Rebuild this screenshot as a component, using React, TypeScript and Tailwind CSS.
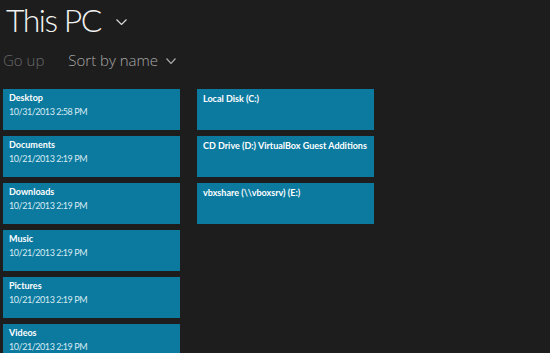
import React from "react";

const Chevron = ({ w, h, stroke }: { w: number; h: number; stroke: string }) => (
  <svg width={w} height={h} viewBox={`0 0 ${w} ${h}`} fill="none">
    <path d={`M0.5 0.5 L${w / 2} ${h - 0.5} L${w - 0.5} 0.5`} stroke={stroke} strokeWidth="1.2" />
  </svg>
);

const left = [
  { name: "Desktop", date: "10/31/2013 2:58 PM" },
  { name: "Documents", date: "10/21/2013 2:19 PM" },
  { name: "Downloads", date: "10/21/2013 2:19 PM" },
  { name: "Music", date: "10/21/2013 2:19 PM" },
  { name: "Pictures", date: "10/21/2013 2:19 PM" },
  { name: "Videos", date: "10/21/2013 2:19 PM" },
];

const right = [
  "Local Disk (C:)",
  "CD Drive (D:) VirtualBox Guest Additions",
  "vbxshare (\\\\vboxsrv) (E:)",
];

export default function App() {
  return (
    <div
      className="w-[550px] h-[353px] overflow-hidden bg-[#1d1d1d] text-white"
      style={{ fontFamily: '"Open Sans", "Noto Sans", sans-serif' }}
    >
      <div className="flex items-center pl-[6px] h-[40px]">
        <span
          className="text-[32px] leading-[40px] font-light tracking-[-1.5px] text-[#f2f2f2]"
          style={{ fontFamily: 'Lato, "Open Sans", sans-serif' }}
        >
          This PC
        </span>
        <span className="ml-[15px] mt-[4px]">
          <Chevron w={11} h={6} stroke="#d8d8d8" />
        </span>
      </div>
      <div className="flex items-center pl-[3px] mt-[9px] h-[22px] text-[15px] font-light">
        <span className="text-[#6a6a6a]">Go up</span>
        <span className="ml-[24px] text-[#a8a8a8]">Sort by name</span>
        <span className="ml-[8px] mt-[2px]">
          <Chevron w={10} h={6} stroke="#a8a8a8" />
        </span>
      </div>
      <div
        className="flex gap-[17px] pl-[3px] mt-[18px]"
        style={{ fontFamily: 'Lato, "Open Sans", sans-serif' }}
      >
        <div className="flex flex-col gap-[6px] w-[177px]">
          {left.map((t) => (
            <div key={t.name} className="h-[41px] bg-[#0c7a9f] pl-[6px] pt-[3px]">
              <div className="text-[9px] leading-[11px] font-bold text-white">{t.name}</div>
              <div className="mt-[3px] text-[9px] leading-[11px] tracking-[-0.45px] text-[#d8ebf2]">
                {t.date}
              </div>
            </div>
          ))}
        </div>
        <div className="flex flex-col gap-[6px] w-[177px]">
          {right.map((t) => (
            <div key={t} className="h-[41px] bg-[#0c7a9f] pl-[6px] pt-[4px]">
              <div className="text-[9px] leading-[11px] font-bold text-white whitespace-nowrap">{t}</div>
            </div>
          ))}
        </div>
      </div>
    </div>
  );
}
